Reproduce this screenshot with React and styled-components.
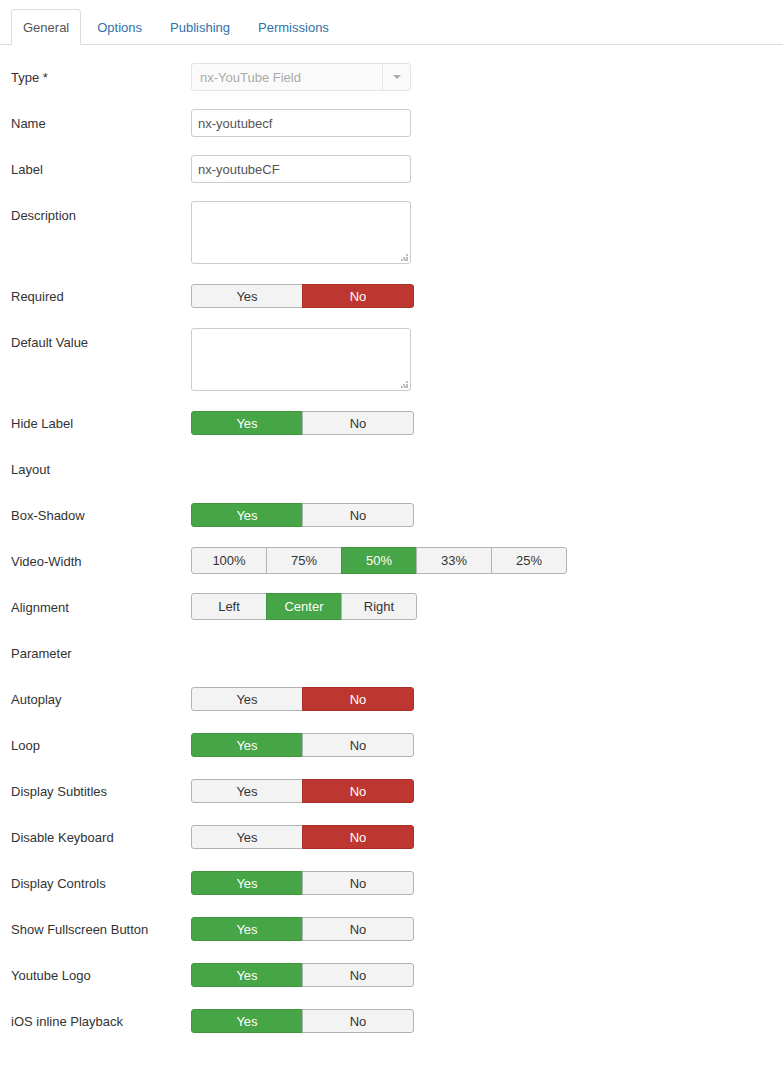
import React from "react";
import styled, { createGlobalStyle, css } from "styled-components";

const Global = createGlobalStyle`
  html, body { margin: 0; padding: 0; background: #fff; }
  body { font-family: "Liberation Sans", Arial, Helvetica, sans-serif; font-size: 13px; color: #333; }
`;

const Page = styled.div`
  padding: 9px 0 0 0;
  width: 783px;
  min-height: 1092px;
`;

const Tabs = styled.ul`
  display: flex;
  list-style: none;
  margin: 0 0 18px 0;
  padding: 0 0 0 11px;
  border-bottom: 1px solid #ddd;
  height: 35px;
`;

const Tab = styled.li`
  height: 35px;
  margin: 0 2px -1px 0;
  box-sizing: border-box;
  padding: 2px 12px 0 12px;
  display: flex;
  align-items: center;
  font-size: 13px;
  border: 1px solid transparent;
  border-radius: 4px 4px 0 0;
  color: #3071a9;
  ${(p) =>
    p.$active &&
    css`
      color: #555;
      background: #fff;
      border-color: #ddd #ddd transparent #ddd;
      height: 36px;
      margin-right: 3px;
      padding: 2px 11px 1px 11px;
    `}
`;

const Form = styled.div`
  display: grid;
  grid-template-columns: 180px 1fr;
  row-gap: 18px;
  padding-left: 11px;
`;

const Label = styled.div`
  box-sizing: border-box;
  padding-top: 5px;
  line-height: 20px;
  min-height: 28px;
  font-size: 13px;
  color: #333;
`;

const Control = styled.div`
  min-height: 28px;
  display: flex;
  align-items: flex-start;
`;

const Input = styled.div`
  width: 220px;
  height: 28px;
  box-sizing: border-box;
  border: 1px solid #ccc;
  border-radius: 3px;
  padding: 1px 6px 0 6px;
  line-height: 26px;
  color: #555;
  font-size: 13px;
  background: #fff;
  overflow: hidden;
`;

const TextArea = styled.div`
  position: relative;
  width: 220px;
  height: 63px;
  box-sizing: border-box;
  border: 1px solid #ccc;
  border-radius: 3px;
  background: #fff;
`;

const Grip = styled.svg`
  position: absolute;
  right: 2px;
  bottom: 2px;
`;

const Select = styled.div`
  width: 220px;
  height: 28px;
  box-sizing: border-box;
  border: 1px solid #e3e3e3;
  border-radius: 3px;
  display: flex;
  background: #fafafa;
  color: #aaa;
`;

const SelectText = styled.div`
  flex: 1;
  padding: 1px 0 0 8px;
  line-height: 26px;
  overflow: hidden;
`;

const SelectArrow = styled.div`
  width: 27px;
  border-left: 1px solid #e8e8e8;
  display: flex;
  align-items: center;
  justify-content: center;
`;

const Caret = styled.div`
  width: 0;
  height: 0;
  border-left: 4px solid transparent;
  border-right: 4px solid transparent;
  border-top: 4px solid #aaa;
`;

const BtnGroup = styled.div`
  display: flex;
  margin-top: ${(p) => (p.$tall ? "0" : "2px")};
`;

const colors = {
  success: { bg: "#46a546", border: "#409740", fg: "#fff" },
  danger: { bg: "#bd362f", border: "#a9302a", fg: "#fff" },
  none: { bg: "#f3f3f3", border: "#b3b3b3", fg: "#333" },
};

const Btn = styled.div`
  width: ${(p) => p.$w}px;
  height: ${(p) => p.$h}px;
  box-sizing: border-box;
  display: flex;
  align-items: center;
  justify-content: center;
  font-size: 13px;
  background: ${(p) => colors[p.$state].bg};
  color: ${(p) => colors[p.$state].fg};
  border: 1px solid ${(p) => colors[p.$state].border};
  margin-left: -1px;
  &:first-child {
    margin-left: 0;
    border-radius: 3px 0 0 3px;
  }
  &:last-child {
    border-radius: 0 3px 3px 0;
  }
`;

function YesNo({ value }) {
  const yesState = value === "yes" ? "success" : "none";
  const noState = value === "no" ? "danger" : "none";
  return (
    <BtnGroup>
      <Btn $w={112} $h={24} $state={yesState}>Yes</Btn>
      <Btn $w={112} $h={24} $state={noState}>No</Btn>
    </BtnGroup>
  );
}

function Choice({ options, active }) {
  return (
    <BtnGroup $tall>
      {options.map((o) => (
        <Btn key={o} $w={76} $h={27} $state={o === active ? "success" : "none"}>
          {o}
        </Btn>
      ))}
    </BtnGroup>
  );
}

function Area() {
  return (
    <TextArea>
      <Grip width="7" height="7" viewBox="0 0 7 7">
        <rect x="5" y="0" width="2" height="2" fill="#bbb" />
        <rect x="2" y="3" width="2" height="2" fill="#bbb" />
        <rect x="5" y="3" width="2" height="2" fill="#bbb" />
        <rect x="0" y="5" width="2" height="2" fill="#bbb" />
        <rect x="3" y="5" width="2" height="2" fill="#bbb" />
        <rect x="5" y="5" width="2" height="2" fill="#bbb" />
      </Grip>
    </TextArea>
  );
}

const rows = [
  ["Type *", <Select><SelectText>nx-YouTube Field</SelectText><SelectArrow><Caret /></SelectArrow></Select>],
  ["Name", <Input>nx-youtubecf</Input>],
  ["Label", <Input>nx-youtubeCF</Input>],
  ["Description", <Area />],
  ["Required", <YesNo value="no" />],
  ["Default Value", <Area />],
  ["Hide Label", <YesNo value="yes" />],
  ["Layout", null],
  ["Box-Shadow", <YesNo value="yes" />],
  ["Video-Width", <Choice options={["100%", "75%", "50%", "33%", "25%"]} active="50%" />],
  ["Alignment", <Choice options={["Left", "Center", "Right"]} active="Center" />],
  ["Parameter", null],
  ["Autoplay", <YesNo value="no" />],
  ["Loop", <YesNo value="yes" />],
  ["Display Subtitles", <YesNo value="no" />],
  ["Disable Keyboard", <YesNo value="no" />],
  ["Display Controls", <YesNo value="yes" />],
  ["Show Fullscreen Button", <YesNo value="yes" />],
  ["Youtube Logo", <YesNo value="yes" />],
  ["iOS inline Playback", <YesNo value="yes" />],
];

export default function App() {
  return (
    <Page>
      <Global />
      <Tabs>
        <Tab $active>General</Tab>
        <Tab>Options</Tab>
        <Tab>Publishing</Tab>
        <Tab>Permissions</Tab>
      </Tabs>
      <Form>
        {rows.map(([label, control]) => (
          <React.Fragment key={label}>
            <Label>{label}</Label>
            <Control>{control}</Control>
          </React.Fragment>
        ))}
      </Form>
    </Page>
  );
}
